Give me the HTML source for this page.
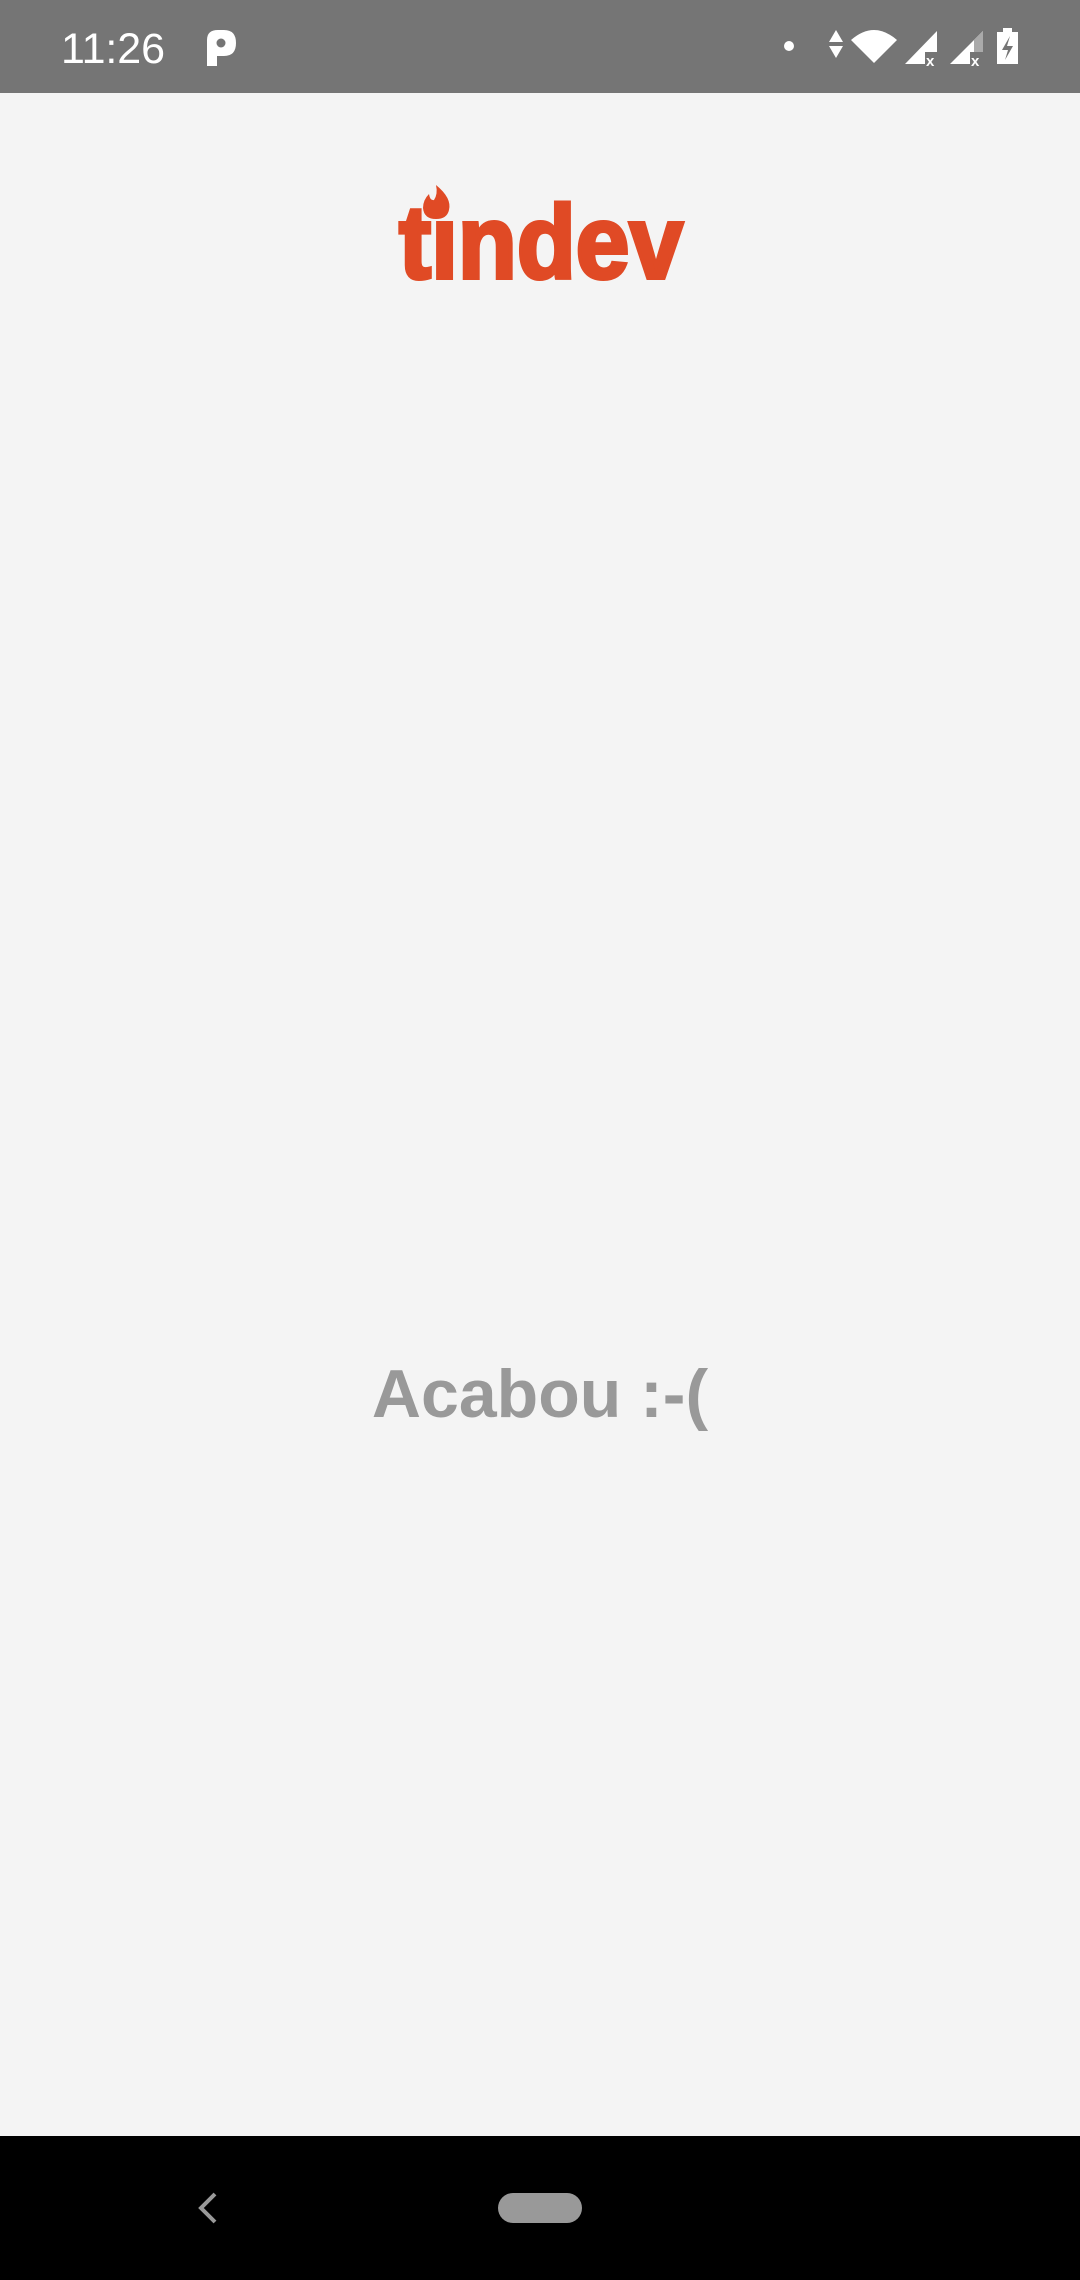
<!DOCTYPE html>
<html><head><meta charset="utf-8">
<style>
html,body{margin:0;padding:0;}
body{width:1080px;height:2280px;background:#f4f4f4;position:relative;overflow:hidden;font-family:"Liberation Sans",sans-serif;}
#sb{position:absolute;left:0;top:0;width:1080px;height:93px;background:#757575;}
#nav{position:absolute;left:0;top:2136px;width:1080px;height:144px;background:#000;}
</style></head><body>
<div id="sb">
<svg width="1080" height="93" style="position:absolute;left:0;top:0">
<text x="61" y="63" font-family="Liberation Sans" font-size="43" fill="#fff" textLength="104">11:26</text>
<path d="M207 66 V40 Q207 30 218 30 H224 Q236 30 236 43 Q236 56 224 56 H217 V66 Z" fill="#fff"/>
<circle cx="221" cy="43" r="4.5" fill="#757575"/>
<circle cx="789" cy="46" r="5" fill="#fff"/>
<path d="M836 30 L843 42 H829 Z M829 46 H843 L836 58 Z" fill="#fff"/>
<path d="M851 40 Q874 20 897 40 L874 63 Z" fill="#fff"/>
<path d="M905 64 L937 31 V64 Z" fill="#fff"/>
<rect x="925" y="52" width="14" height="14" fill="#757575"/>
<text x="926" y="66" font-size="15" font-weight="bold" fill="#fff">x</text>
<path d="M950 64 L983 31 V64 Z" fill="#fff"/>
<path d="M974 40 L983 31 V52 H974 Z" fill="#aaa"/>
<rect x="970" y="52" width="14" height="14" fill="#757575"/>
<text x="971" y="66" font-size="15" font-weight="bold" fill="#fff">x</text>
<rect x="1003" y="28" width="9" height="5" fill="#fff"/>
<rect x="997" y="32" width="21" height="32" fill="#fff"/>
<path d="M1010 36 L1002 50 H1008 L1005 60 L1013 46 H1007 Z" fill="#757575"/>
</svg>
</div>
<svg width="1080" height="300" style="position:absolute;left:0;top:0">
<text x="399" y="278" font-family="Liberation Sans" font-weight="bold" font-size="104" fill="#e04a25" stroke="#e04a25" stroke-width="4" textLength="284" lengthAdjust="spacingAndGlyphs">tındev</text>
<path d="M436 185 Q452 198 449 210 Q447 219 436 219 Q424 219 423 208 Q423 200 429 194 Q430 201 434 200 Q438 194 436 185 Z" fill="#e04a25"/>
</svg>
<div style="position:absolute;left:0;width:1080px;top:1354px;text-align:center;font-size:68px;font-weight:bold;color:#999;line-height:80px">Acabou :-(</div>
<div id="nav">
<svg width="1080" height="144" style="position:absolute;left:0;top:0">
<path d="M215 58 L201 72 L215 86" stroke="#999" stroke-width="4" fill="none"/>
<rect x="498" y="57" width="84" height="30" rx="15" fill="#999"/>
</svg>
</div>
</body></html>
